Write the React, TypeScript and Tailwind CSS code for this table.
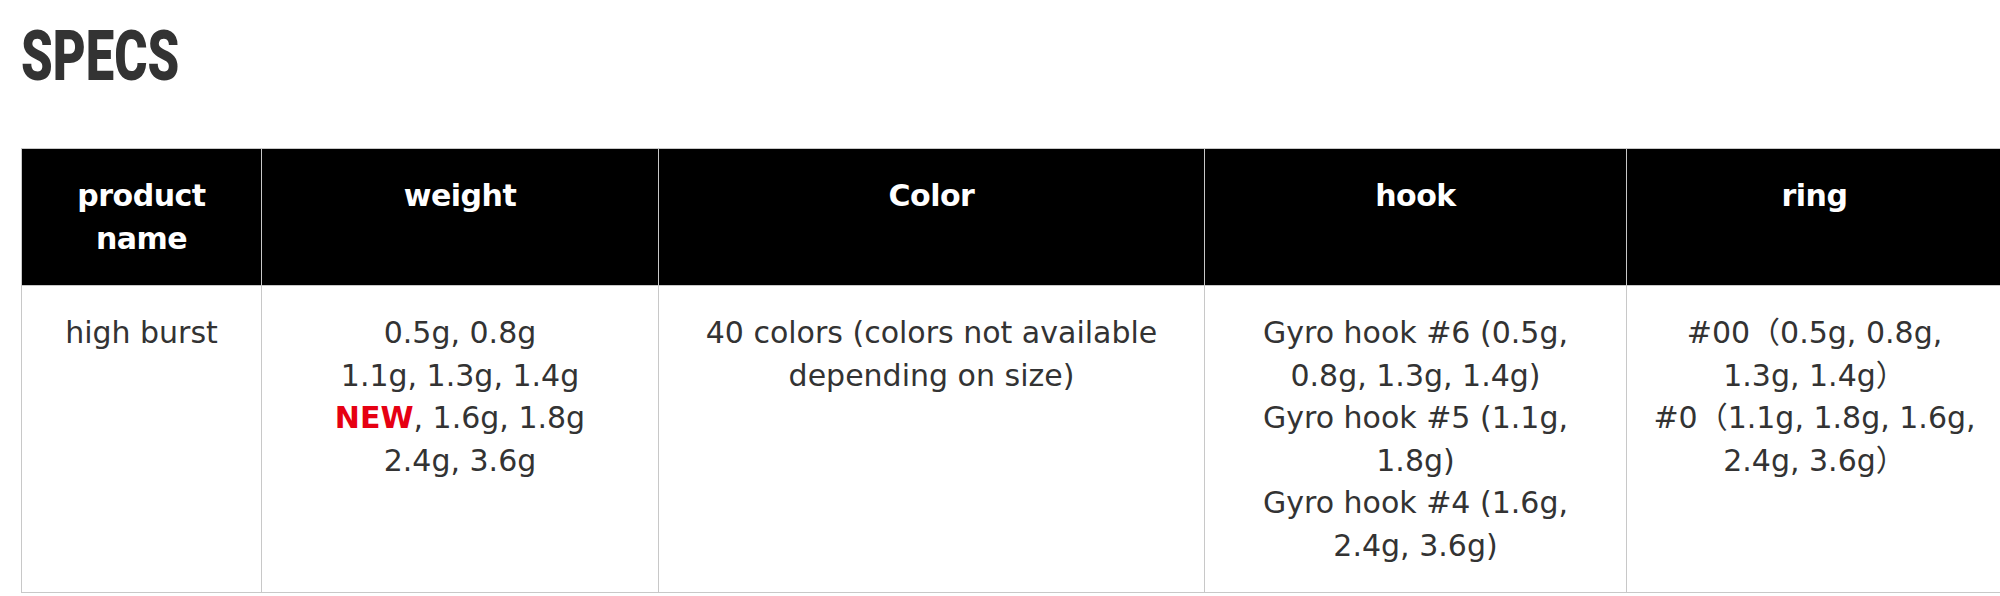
const font = '[font-family:"DejaVu_Sans","Noto_Sans_CJK_JP",sans-serif]'

const columns = [
  { label: ['product', 'name'], width: 'w-[240px]' },
  { label: ['weight'], width: 'w-[397px]' },
  { label: ['Color'], width: 'w-[546px]' },
  { label: ['hook'], width: 'w-[422px]' },
  { label: ['ring'], width: 'w-[376px]' },
]

export default function App() {
  return (
    <div className="w-[2000px] h-[596px] overflow-hidden bg-white pl-[21px]">
      {/* Heading */}
      <h2 className="pt-[21px] h-[148px] text-[#333] [font-family:Roboto,sans-serif] font-black text-[70px] leading-[70px]">
        <span className="inline-block origin-left scale-x-[0.725]">SPECS</span>
      </h2>

      {/* Spec table */}
      <table className={`border-collapse table-fixed w-[1981px] text-[30px] leading-[42.5px] text-[#333] ${font}`}>
        <thead>
          <tr className="bg-black text-white">
            {columns.map((c) => (
              <th
                key={c.label[0]}
                className={`${c.width} border border-[#c8c8c8] align-top text-center font-bold pt-[26px] pb-[25px] px-[20px] h-[135px] tracking-[-0.5px]`}
              >
                {c.label.map((l) => (
                  <div key={l}>{l}</div>
                ))}
              </th>
            ))}
          </tr>
        </thead>
        <tbody>
          <tr>
            <td className="border border-[#c8c8c8] align-top text-center pt-[26px] pb-[25px] px-[20px]">
              high burst
            </td>
            <td className="border border-[#c8c8c8] align-top text-center pt-[26px] pb-[25px] px-[20px]">
              0.5g, 0.8g
              <br />
              1.1g, 1.3g, 1.4g
              <br />
              <span className="font-bold text-[#e60012]">NEW</span>, 1.6g, 1.8g
              <br />
              2.4g, 3.6g
            </td>
            <td className="border border-[#c8c8c8] align-top text-center pt-[26px] pb-[25px] px-[25px]">
              40 colors (colors not available depending on size)
            </td>
            <td className="border border-[#c8c8c8] align-top text-center pt-[26px] pb-[25px] px-[25px]">
              Gyro hook #6 (0.5g, 0.8g, 1.3g, 1.4g)
              <br />
              Gyro hook #5 (1.1g, 1.8g)
              <br />
              Gyro hook #4 (1.6g, 2.4g, 3.6g)
            </td>
            <td className="border border-[#c8c8c8] align-top text-center pt-[26px] pb-[25px] px-[25px]">
              #00（0.5g, 0.8g, 1.3g, 1.4g）
              <br />
              #0（1.1g, 1.8g, 1.6g, 2.4g, 3.6g）
            </td>
          </tr>
        </tbody>
      </table>
    </div>
  )
}
